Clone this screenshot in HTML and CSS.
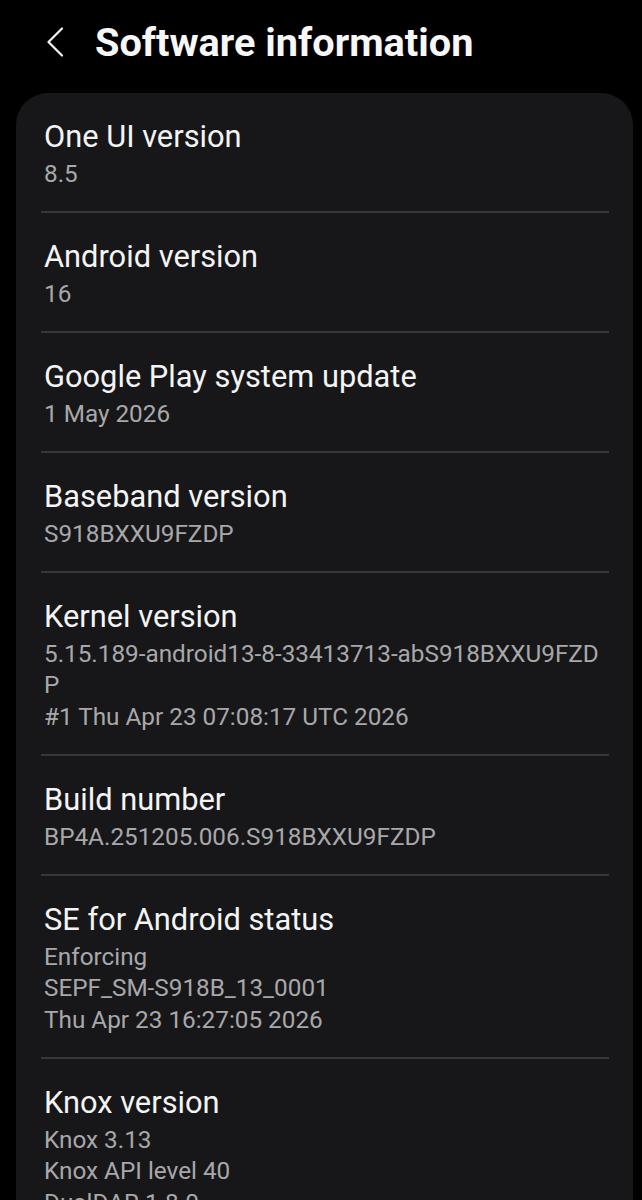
FILE: index.html
```html
<!DOCTYPE html>
<html lang="en">
<head>
<meta charset="utf-8">
<title>Software information</title>
<link rel="stylesheet" href="styles.css">
</head>
<body>
<header class="appbar">
  <span class="back" aria-label="Back">
    <svg width="18" height="30" viewBox="0 0 18 30" fill="none" stroke="#f2f2f2" stroke-width="2.2" stroke-linecap="round" stroke-linejoin="round"><path d="M16 1.5 L2.5 15 L16 28.5"/></svg>
  </span>
  <h1 class="title">Software information</h1>
</header>
<main class="card">
  <div class="row">
    <div class="label">One UI version</div>
    <div class="value">8.5</div>
  </div>
  <div class="row">
    <div class="label">Android version</div>
    <div class="value">16</div>
  </div>
  <div class="row">
    <div class="label">Google Play system update</div>
    <div class="value">1 May 2026</div>
  </div>
  <div class="row">
    <div class="label">Baseband version</div>
    <div class="value">S918BXXU9FZDP</div>
  </div>
  <div class="row">
    <div class="label">Kernel version</div>
    <div class="value">5.15.189-android13-8-33413713-abS918BXXU9FZD<br>P</div>
    <div class="value">#1 Thu Apr 23 07:08:17 UTC 2026</div>
  </div>
  <div class="row">
    <div class="label">Build number</div>
    <div class="value">BP4A.251205.006.S918BXXU9FZDP</div>
  </div>
  <div class="row">
    <div class="label">SE for Android status</div>
    <div class="value">Enforcing</div>
    <div class="value">SEPF_SM-S918B_13_0001</div>
    <div class="value">Thu Apr 23 16:27:05 2026</div>
  </div>
  <div class="row">
    <div class="label">Knox version</div>
    <div class="value">Knox 3.13</div>
    <div class="value">Knox API level 40</div>
    <div class="value">DualDAR 1.8.0</div>
  </div>
</main>
</body>
</html>
```
FILE: styles.css
```css
html, body {
  margin: 0;
  padding: 0;
  background: #000;
}
body {
  font-family: Roboto, "Noto Sans", sans-serif;
  color: #f4f4f4;
  width: 642px;
}
.appbar {
  height: 92px;
  display: flex;
  align-items: center;
  padding-left: 46px;
  box-sizing: border-box;
}
.back {
  display: flex;
  width: 18px;
  height: 30px;
  margin-top: -8px;
}
.title {
  margin: -8px 0 0 31px;
  font-size: 39.7px;
  font-weight: 700;
  color: #f7f7f7;
}
.card {
  margin: 1px 9px 0 16px;
  background: #171719;
  border-radius: 32px 32px 0 0;
  padding: 0 24px 0 25px;
}
.row {
  padding: 22.5px 0 22px 3px;
  border-bottom: 2px solid #37373a;
}
.row:last-child {
  border-bottom: none;
}
.label {
  font-size: 30.8px;
  line-height: 42px;
  color: #f4f4f4;
}
.value {
  font-size: 24.3px;
  line-height: 31.5px;
  color: #a8a8aa;
}
```
